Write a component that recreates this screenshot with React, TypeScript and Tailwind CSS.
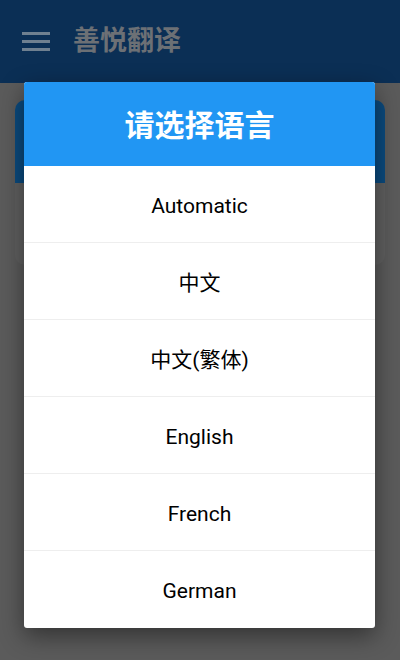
import React from "react";

const languages = ["Automatic", "中文", "中文(繁体)", "English", "French", "German"];

function Hamburger() {
  return (
    <div className="flex flex-col gap-[5px] w-[28px]">
      <span className="block h-[3px] bg-[#6f8090]" />
      <span className="block h-[3px] bg-[#6f8090]" />
      <span className="block h-[3px] bg-[#6f8090]" />
    </div>
  );
}

export default function App() {
  return (
    <div
      className="relative w-[400px] h-[660px] overflow-hidden bg-[#5b5b5b]"
      style={{ fontFamily: "Roboto, 'Noto Sans CJK SC', sans-serif" }}
    >
      {/* dimmed page underneath */}
      <div className="h-[83px] bg-[#0b2f55] flex items-center px-[22px] gap-[23px]">
        <Hamburger />
        <h1 className="text-[27px] font-bold text-[#6c7075] leading-none">善悦翻译</h1>
      </div>
      <div className="px-[15px] pt-[17px]">
        <div className="rounded-[10px] overflow-hidden bg-[#606060] h-[165px]">
          <div className="h-[83px] bg-[#0b4a7e]" />
        </div>
      </div>

      {/* dialog */}
      <div className="absolute left-[24px] top-[82px] w-[351px] bg-white rounded-[3px] overflow-hidden shadow-[0_8px_24px_rgba(0,0,0,0.45)]">
        <div className="h-[84px] bg-[#2196f3] flex items-center justify-center pt-[3px]">
          <h2 className="text-[30px] font-bold text-white leading-none">请选择语言</h2>
        </div>
        <ul>
          {languages.map((lang, i) => (
            <li
              key={lang}
              className={
                "h-[77px] flex items-center justify-center pt-[5px] text-[21px] text-black " +
                (i < languages.length - 1 ? "border-b border-[#eeeeee]" : "")
              }
            >
              {lang}
            </li>
          ))}
        </ul>
      </div>
    </div>
  );
}
